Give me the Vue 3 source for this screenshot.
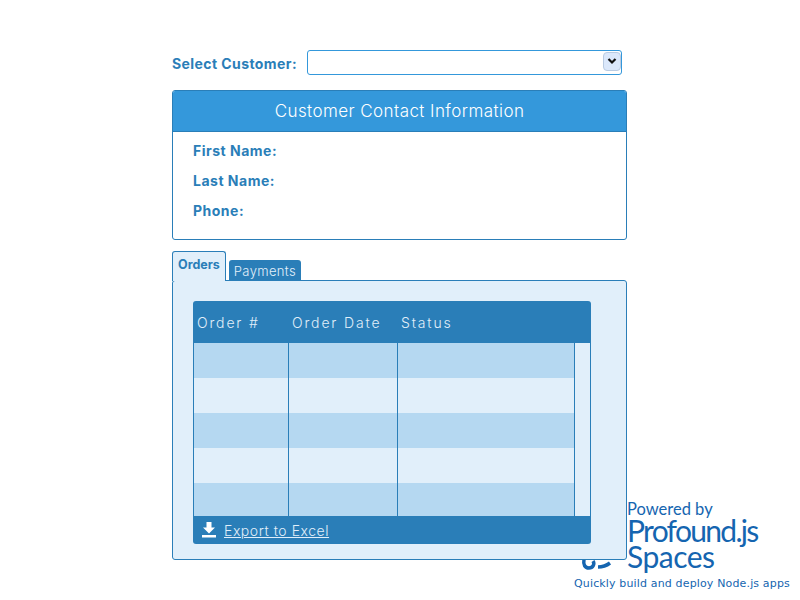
<template>
  <div class="page">
    <div class="customer-row">
      <label class="customer-label" for="customer">Select Customer:</label>
      <div class="select-wrap">
        <select id="customer" class="customer-select"></select>
        <span class="select-arrow">
          <svg width="10" height="7" viewBox="0 0 10 7">
            <path d="M1.500 1 5 4.500 8.500 1" fill="none" stroke="#111" stroke-width="2.200" />
          </svg>
        </span>
      </div>
    </div>

    <section class="contact">
      <h2 class="contact-title">Customer Contact Information</h2>
      <div class="contact-body">
        <div v-for="field in contactFields" :key="field" class="contact-field">{{ field }}:</div>
      </div>
    </section>

    <div class="tabs">
      <div class="tab tab-active">Orders</div>
      <div class="tab">Payments</div>
    </div>
    <section class="tab-panel">
      <div class="grid">
        <div class="grid-head">
          <div v-for="col in columns" :key="col" class="head-cell">{{ col }}</div>
        </div>
        <div class="grid-body">
          <div v-for="(row, i) in rows" :key="i" class="grid-row" :class="{ odd: i % 2 === 0, last: i === rows.length - 1 }">
            <div class="cell"></div>
            <div class="cell"></div>
            <div class="cell"></div>
          </div>
        </div>
        <div class="grid-foot">
          <svg class="export-icon" width="14" height="16" viewBox="0 0 14 16">
            <path d="M4.500 0h5v5.500H13L7 11.500 1 5.500h3.500z M0 13h14v2.500H0z" fill="#fff" />
          </svg>
          <a class="export-link" href="#">Export to Excel</a>
        </div>
      </div>
    </section>

    <div class="powered">
      <svg class="powered-mark" width="40" height="22" viewBox="0 0 40 22">
        <path d="M10 10c-1 6 1 9 5 9s6-4 4-7M24 18c4 0 8-1 12-4" fill="none" stroke="#1565b0" stroke-width="3.500" />
      </svg>
      <div class="powered-text">
        <div class="powered-by">Powered by</div>
        <div class="powered-name name-profound">Profound.js</div>
        <div class="powered-name name-spaces">Spaces</div>
      </div>
      <div class="powered-tag">Quickly build and deploy Node.js apps</div>
    </div>
  </div>
</template>

<script setup>
const contactFields = ['First Name', 'Last Name', 'Phone']
const columns = ['Order #', 'Order Date', 'Status']
const rows = [1, 2, 3, 4, 5]
</script>

<style>
html, body {
  margin: 0;
  background: #fff;
}
</style>

<style scoped>
.page {
  position: relative;
  width: 800px;
  height: 600px;
  box-sizing: border-box;
  padding: 50px 0 0 172px;
  font-family: Inter, "Liberation Sans", sans-serif;
  overflow: hidden;
}

.customer-row {
  display: flex;
  align-items: center;
  height: 25px;
}

.customer-label {
  width: 135px;
  font-size: 14px;
  font-weight: 700;
  letter-spacing: 0.42px;
  color: #2a7eb8;
  position: relative;
  top: 1px;
}

.select-wrap {
  position: relative;
  width: 315px;
  height: 25px;
}

.customer-select {
  display: block;
  width: 100%;
  height: 100%;
  box-sizing: border-box;
  appearance: none;
  background: #fff;
  border: 1px solid #3498db;
  border-radius: 3px;
}

.select-arrow {
  position: absolute;
  top: 2px;
  right: 1px;
  width: 18px;
  height: 19px;
  box-sizing: border-box;
  display: flex;
  align-items: center;
  justify-content: center;
  background: #dbe8fb;
  border: 1px solid #b9cbe2;
  border-radius: 4px;
}

.contact {
  width: 455px;
  height: 150px;
  box-sizing: border-box;
  margin-top: 15px;
  border: 1px solid #2a7eb8;
  border-radius: 3px;
  overflow: hidden;
}

.contact-title {
  margin: 0;
  height: 41px;
  box-sizing: border-box;
  line-height: 40px;
  background: #3498db;
  border-bottom: 1px solid #2a7eb8;
  color: #fff;
  font-size: 17px;
  font-weight: 300;
  letter-spacing: 0.43px;
  text-align: center;
}

.contact-body {
  padding: 4px 0 0 20px;
}

.contact-field {
  height: 30px;
  line-height: 30px;
  font-size: 14px;
  font-weight: 700;
  letter-spacing: 0.5px;
  color: #2a7eb8;
}

.tabs {
  display: flex;
  align-items: flex-end;
  gap: 3px;
  height: 30px;
  margin-top: 11px;
  position: relative;
  z-index: 2;
}

.tab {
  height: 21px;
  box-sizing: border-box;
  padding: 0 5px;
  line-height: 23px;
  background: #2a7eb8;
  color: #e1effa;
  font-size: 13px;
  font-weight: 300;
  letter-spacing: 0.35px;
  border-radius: 3px 3px 0 0;
}

.tab-active {
  height: 30px;
  padding: 0 5px;
  line-height: 26px;
  background: #e1effa;
  border: 1px solid #2a7eb8;
  border-bottom: none;
  color: #2a7eb8;
  font-size: 12.5px;
  font-weight: 700;
  letter-spacing: 0;
}

.tab-panel {
  position: relative;
  z-index: 1;
  width: 455px;
  height: 280px;
  box-sizing: border-box;
  margin-top: -1px;
  padding: 20px;
  background: #e1effa;
  border: 1px solid #2a7eb8;
  border-radius: 3px;
}

.grid {
  width: 398px;
  display: flex;
  flex-direction: column;
}

.grid-head {
  display: grid;
  grid-template-columns: 95px 109px 194px;
  height: 42px;
  background: #2a7eb8;
  border-radius: 3px 3px 0 0;
}

.head-cell {
  padding-left: 4px;
  line-height: 44px;
  color: #e1effa;
  font-size: 14px;
  font-weight: 300;
  letter-spacing: 1.85px;
}

.grid-body {
  height: 173px;
  box-sizing: border-box;
  border-left: 1px solid #2a7eb8;
  border-right: 1px solid #2a7eb8;
  background: #e1effa;
}

.grid-row {
  display: grid;
  grid-template-columns: 95px 109px 177px;
  width: 381px;
  height: 35px;
  margin-left: -1px;
  background: #e1effa;
  border-right: 1px solid #2a7eb8;
  box-sizing: content-box;
}

.grid-row.odd {
  background: #b5d8f1;
}

.grid-row.last {
  height: 33px;
}

.cell {
  border-left: 1px solid #2a7eb8;
}

.grid-foot {
  display: flex;
  align-items: center;
  height: 28px;
  padding-left: 9px;
  background: #2a7eb8;
  border-radius: 0 0 3px 3px;
}

.export-icon {
  flex: none;
}

.export-link {
  margin-left: 8px;
  color: #e1effa;
  font-size: 14px;
  font-weight: 300;
  letter-spacing: 0.55px;
  text-decoration: underline;
}

.powered {
  position: absolute;
  left: 574px;
  top: 500px;
  width: 226px;
  height: 100px;
}

.powered-mark {
  position: absolute;
  left: 0;
  top: 49px;
}

.powered-text {
  position: absolute;
  left: 53px;
  top: 0;
  color: #1565b0;
}

.powered-by {
  font-family: Lato, sans-serif;
  font-size: 16.500px;
  line-height: 18px;
}

.powered-name {
  font-family: Lato, sans-serif;
  font-size: 30px;
  line-height: 26px;
}

.name-profound {
  letter-spacing: -1.7px;
  margin-top: -1px;
}

.name-spaces {
  letter-spacing: -0.5px;
}

.powered-tag {
  position: absolute;
  left: 0;
  top: 77px;
  font-family: "DejaVu Sans", sans-serif;
  font-size: 11px;
  letter-spacing: 0.15px;
  color: #1565b0;
  white-space: nowrap;
}
</style>
